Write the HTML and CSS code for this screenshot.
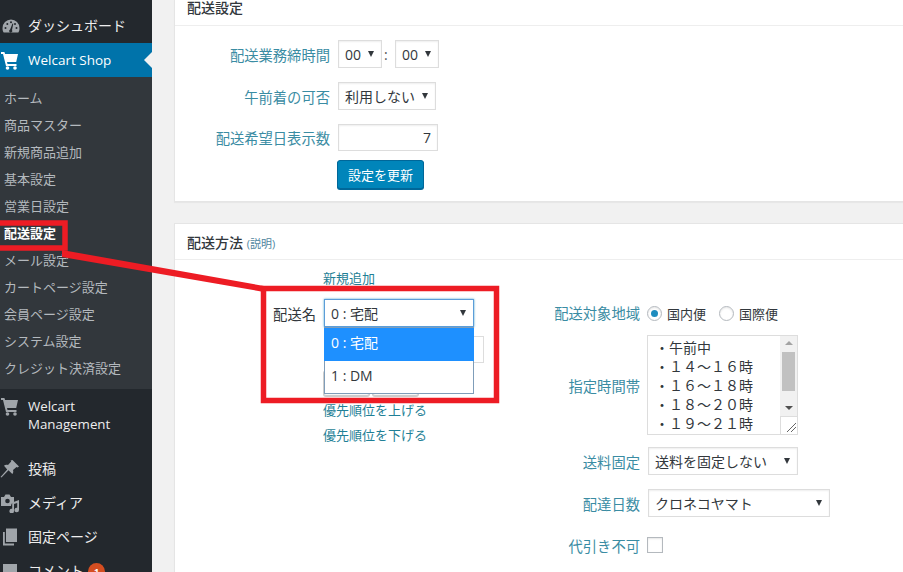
FILE: index.html
```html
<!DOCTYPE html>
<html lang="ja">
<head>
<meta charset="utf-8">
<title>配送設定</title>
<link rel="stylesheet" href="styles.css">
</head>
<body>
<div class="page">
  <nav class="sidebar">
    <a class="top dash">
      <svg class="ico" viewBox="0 0 20 20"><path d="M10 3.500a8.700 8.700 0 0 0-8.500 8.700c0 1.800.5 3.300 1.200 4.300h14.600c.7-1 1.200-2.500 1.200-4.300A8.700 8.700 0 0 0 10 3.500z"/><g fill="#23282d"><circle cx="4.500" cy="12" r="1"/><circle cx="6.300" cy="8" r="1"/><circle cx="10" cy="6.300" r="1"/><circle cx="14" cy="8" r="1"/><circle cx="15.500" cy="12" r="1"/><path d="M11.500 7.500l.8.300-1.300 6.200a1.600 1.600 0 1 1-1.900-.5z"/></g></svg>
      <span>ダッシュボード</span>
    </a>
    <a class="top current">
      <svg class="ico" viewBox="0 0 20 20"><path d="M1 2h3.400l.7 2H18l-1.800 8H7l.5 2h9v2H6L3 4H1z"/><circle cx="7.500" cy="18" r="1.800"/><circle cx="15" cy="18" r="1.800"/></svg>
      <span>Welcart Shop</span>
    </a>
    <ul class="submenu">
      <li>ホーム</li>
      <li>商品マスター</li>
      <li>新規商品追加</li>
      <li>基本設定</li>
      <li>営業日設定</li>
      <li class="on">配送設定</li>
      <li>メール設定</li>
      <li>カートページ設定</li>
      <li>会員ページ設定</li>
      <li>システム設定</li>
      <li>クレジット決済設定</li>
    </ul>
    <a class="top tall">
      <svg class="ico" viewBox="0 0 20 20"><path d="M1 2h3.400l.7 2H18l-1.800 8H7l.5 2h9v2H6L3 4H1z"/><circle cx="7.500" cy="18" r="1.800"/><circle cx="15" cy="18" r="1.800"/></svg>
      <span>Welcart<br>Management</span>
    </a>
    <a class="top">
      <svg class="ico" viewBox="0 0 20 20"><path d="M12.500 1l6.500 6.500-1.500 1-1-.6-3.500 3.200c.6 1.800.2 3-.7 4L8.500 11.300 1.500 18.500 0.500 18l6.700-7.500L4 6.700c1-.9 2.300-1.300 4-.7l3.200-3.500-.6-1z"/></svg>
      <span>投稿</span>
    </a>
    <a class="top">
      <svg class="ico" viewBox="0 0 20 20"><path d="M1 4h3l1.500-2.500h4L11 4h3v5.500c-1.800.3-3 1.500-3 3.500H1z"/><circle cx="7.500" cy="8" r="2.300" fill="#23282d"/><path d="M19 7v10a2.300 2.300 0 1 1-1.800-2.200V10l-3.200 1v7a2.300 2.300 0 1 1-1.800-2.200V9.500z"/></svg>
      <span>メディア</span>
    </a>
    <a class="top">
      <svg class="ico" viewBox="0 0 20 20"><path d="M6 1.500h11v13.500H6z"/><path d="M3 5v13.500h11v-2H4.800V5z"/></svg>
      <span>固定ページ</span>
    </a>
    <a class="top">
      <svg class="ico" viewBox="0 0 20 20"><path d="M3 3h14v11h-6l-4 4v-4H3z"/></svg>
      <span>コメント</span><b class="badge">1</b>
    </a>
  </nav>

  <main class="main">
    <section class="box box-first">
      <h2 class="box-title">配送設定</h2>
      <div class="settings">
        <label class="lbl">配送業務締時間</label>
        <div class="inline">
          <div class="select w44"><span>00</span><i class="caret"></i></div>
          <span class="colon">:</span>
          <div class="select w44"><span>00</span><i class="caret"></i></div>
        </div>
        <label class="lbl">午前着の可否</label>
        <div class="select w98"><span>利用しない</span><i class="caret"></i></div>
        <label class="lbl">配送希望日表示数</label>
        <input class="num" type="text" value="7">
        <span></span>
        <button class="primary" type="button">設定を更新</button>
      </div>
    </section>

    <section class="box box-second">
      <h2 class="box-title">配送方法 <small>(説明)</small></h2>
      <div class="method">
        <div class="method-left">
          <a class="link add">新規追加</a>
          <div class="name-row">
            <label class="plain">配送名</label>
            <div class="combo">
              <div class="select focus w150"><span>0 : 宅配</span><i class="caret"></i></div>
              <ul class="dropdown">
                <li class="sel">0 : 宅配</li>
                <li>1 : DM</li>
              </ul>
            </div>
          </div>
          <div class="under">
            <input class="name-input" type="text">
            <div class="btns"><button class="ghost" type="button"></button><button class="ghost" type="button"></button></div>
            <a class="link">優先順位を上げる</a>
            <a class="link">優先順位を下げる</a>
          </div>
        </div>
        <div class="method-right">
          <label class="lbl r1">配送対象地域</label>
          <div class="radios">
            <span class="radio checked"></span><span class="rtext">国内便</span>
            <span class="radio second"></span><span class="rtext">国際便</span>
          </div>
          <label class="lbl">指定時間帯</label>
          <div class="area">
            <div class="area-text">
              <div>・午前中</div>
              <div>・１４～１６時</div>
              <div>・１６～１８時</div>
              <div>・１８～２０時</div>
              <div>・１９～２１時</div>
            </div>
            <div class="scroll">
              <div class="sb">
                <i class="sb-up"></i>
                <i class="sb-thumb"></i>
                <i class="sb-down"></i>
              </div>
              <div class="grip">
                <svg viewBox="0 0 16 16" width="16" height="16"><path d="M6 15L15 6M10 15l5-5" stroke="#666" fill="none"/></svg>
              </div>
            </div>
          </div>
          <label class="lbl">送料固定</label>
          <div class="select w150"><span>送料を固定しない</span><i class="caret"></i></div>
          <label class="lbl">配達日数</label>
          <div class="select w182"><span>クロネコヤマト</span><i class="caret"></i></div>
          <label class="lbl">代引き不可</label>
          <div class="check-cell"><input class="check" type="checkbox"></div>
        </div>
      </div>
    </section>
  </main>

  <svg class="annot" viewBox="0 0 903 572" width="903" height="572">
    <g fill="none" stroke="#ed1c24" stroke-width="5.500">
      <path d="M-5 223H65V248H-5"/>
      <path d="M263.500 288.500H496.500V400.500H263.500z"/>
    </g>
    <path d="M62 250L264 286 264 292 62 257z" fill="#ed1c24"/>
  </svg>
</div>
</body>
</html>
```
FILE: styles.css
```css
* { box-sizing: border-box; }
html, body { margin: 0; height: 572px; overflow: hidden; }
body {
  font-family: "Open Sans", "Noto Sans CJK JP", sans-serif;
  font-size: 14px;
  color: #32373c;
  background: #f1f1f1;
}
.page { position: relative; display: flex; width: 903px; height: 572px; overflow: hidden; }

/* Sidebar */
.sidebar { width: 152px; flex: none; background: #23282d; padding-top: 9px; }
.top {
  display: flex; align-items: center; height: 34px;
  color: #eee; font-size: 14px; line-height: 18px; position: relative;
}
.top span { margin-left: 8px; }
.dash { padding-left: 1px; padding-bottom: 1px; }
.dash span { margin-left: 7px; }
.ico { width: 20px; height: 20px; flex: none; fill: #a0a5aa; }
.current { background: #0073aa; color: #fff; font-size: 13.500px; }
.current .ico { fill: #fff; }
.current::after {
  content: ""; position: absolute; right: 0; top: 9px;
  border: 8px solid transparent; border-right-color: #f1f1f1; border-left-width: 0;
}
.tall { height: 63px; align-items: flex-start; padding-top: 8px; }
.tall .ico { margin-top: -1px; }
.tall span { font-size: 13.300px; }
.badge {
  width: 17px; height: 17px; margin-left: 4px; border-radius: 50%;
  background: #d54e21; color: #fff; font-size: 9px; line-height: 17px; text-align: center;
}
.submenu { list-style: none; margin: 0; padding: 8px 0 7px; background: #32373c; }
.submenu li { height: 27px; line-height: 27px; padding-left: 4px; font-size: 13px; color: #b4b9be; }
.submenu .on { color: #fff; font-weight: 700; }

/* Main */
.main { flex: 1; min-width: 0; padding-left: 22px; }
.box { background: #fff; border: 1px solid #e5e5e5; border-right: 0; box-shadow: 0 1px 1px rgba(0,0,0,.04); }
.box-first { border-top: 0; height: 202px; }
.box-second { margin-top: 21px; height: 400px; }
.box-title {
  margin: 0; padding: 0 12px; font-size: 14px; font-weight: 500; line-height: 16px;
  border-bottom: 1px solid #eee; color: #32373c;
}
.box-first .box-title { height: 26px; }
.box-second .box-title { height: 36px; padding-top: 11px; }
.box-title small { font-size: 11px; font-weight: 400; color: #4f86a0; }

.settings {
  display: grid; grid-template-columns: 155px auto; justify-content: start;
  column-gap: 8px; padding: 14px 0 0; align-items: center; row-gap: 14px;
}
.lbl { text-align: right; color: #3a8ca3; font-size: 14.300px; white-space: nowrap; }
.r1 { padding-bottom: 1px; }
.inline { display: flex; align-items: center; }
.colon { width: 13px; padding-left: 2px; color: #555; }
.select {
  display: flex; align-items: center; justify-content: space-between; height: 28px;
  padding: 0 7px 0 6px; background: #fff; border: 1px solid #ddd;
  box-shadow: inset 0 1px 2px rgba(0,0,0,.07); color: #32373c; white-space: nowrap; font-size: 14px;
}
.w44 { width: 44px; }
.w98 { width: 98px; }
.w150 { width: 150px; }
.w182 { width: 182px; }
.caret { width: 0; height: 0; border: 3.500px solid transparent; border-top: 6px solid #32373c; border-bottom: 0; flex: none; }
.num {
  width: 100px; height: 27px; margin: 0; padding: 0 6px; text-align: right;
  border: 1px solid #ddd; box-shadow: inset 0 1px 2px rgba(0,0,0,.07);
  font: inherit; color: #32373c; background: #fff;
}
.primary {
  width: 87px; height: 29px; margin: -5px 0 0 -1px; padding: 0; border: 1px solid #006799; border-radius: 3px;
  background: #0085ba; color: #fff; font: inherit; font-size: 13px; box-shadow: 0 1px 0 #006799;
}

.method { display: flex; padding-left: 12px; }
.method-left { width: 297px; flex: none; display: flex; flex-direction: column; }
.link { color: #1f7f96; font-size: 13px; line-height: 20px; }
.add { margin: 8px 0 11px 136px; }
.name-row { display: flex; align-items: center; }
.plain { width: 129px; margin-right: 8px; text-align: right; color: #32373c; font-size: 14.300px; }
.combo { position: relative; }
.focus { border-color: #5b9dd9; box-shadow: 0 0 2px rgba(30,140,190,.8); padding-bottom: 1px; }
.dropdown {
  position: absolute; left: 0; top: 28px; width: 150px; margin: 0; padding: 0; list-style: none;
  background: #fff; border: 1px solid #7f9db9; z-index: 2; font-size: 14px;
}
.dropdown li { height: 33px; line-height: 30px; padding-left: 6px; }
.dropdown li:last-child { height: 32px; }
.dropdown .sel { background: #1e90ff; color: #fff; margin: 0 -1px; padding-left: 7px; }
.under { display: flex; flex-direction: column; padding-left: 137px; }
.name-input { width: 160px; height: 27px; margin-top: 9px; border: 1px solid #ddd; background: #fff; }
.btns { display: flex; gap: 2px; margin: 7px 0 2px -1px; }
.ghost {
  width: 47px; height: 26px; padding: 0; border: 1px solid #ccc; border-radius: 3px;
  background: #f7f7f7; box-shadow: 0 1px 0 #ccc;
}
.under .link { margin-left: -1px; height: 25px; line-height: 25px; }

.method-right {
  margin-left: 60px; display: grid; grid-template-columns: 96px auto; column-gap: 8px;
  justify-content: start; align-items: center; align-content: start;
  grid-template-rows: 28px 108px 40px 42px 42px; padding-top: 39px;
}
.method-right > :nth-child(3), .method-right > :nth-child(4) { margin-top: 8px; }
.method-right > :nth-child(5), .method-right > :nth-child(6) { margin-top: 12px; }
.method-right > :nth-child(7), .method-right > :nth-child(8) { margin-top: 14px; }
.method-right > :nth-child(9), .method-right > :nth-child(10) { margin-top: 14px; }
.radios { display: flex; align-items: center; margin-left: -1px; }
.radio {
  width: 15px; height: 15px; border-radius: 50%; border: 1px solid #b4b9be; background: #fff;
  box-shadow: inset 0 1px 2px rgba(0,0,0,.1); position: relative; flex: none;
}
.radio.checked::after {
  content: ""; position: absolute; left: 3px; top: 3px; width: 7px; height: 7px; border-radius: 50%; background: #1e8cbe;
}
.second { margin-left: 13px; }
.rtext { margin-left: 5px; font-size: 13px; line-height: 16px; padding-top: 1px; color: #32373c; }
.area {
  display: flex; width: 151px; height: 100px; margin-left: -1px; border: 1px solid #ddd; background: #fff; overflow: hidden;
}
.area-text { flex: 1; padding: 2px 0 0 7px; font-size: 14px; line-height: 19px; white-space: nowrap; color: #32373c; overflow: hidden; }
.scroll { width: 17px; flex: none; display: flex; flex-direction: column; }
.sb { height: 80px; background: #f1f1f1; display: flex; flex-direction: column; align-items: center; position: relative; }
.sb-up, .sb-down { flex: none; width: 0; height: 0; border: 4px solid transparent; box-sizing: content-box; }
.sb-up { margin-top: 5px; border-top: 0; border-bottom: 4px solid #a3a3a3; }
.sb-down { margin-top: auto; margin-bottom: 6px; border-bottom: 0; border-top: 4px solid #505050; }
.sb-thumb { width: 13px; height: 39px; background: #c1c1c1; margin-top: 7px; }
.grip { flex: 1; border: 1px solid #ddd; border-right: 0; border-bottom: 0; background: #fff; }
.grip svg { display: block; }
.check-cell { display: flex; }
.check {
  appearance: none; width: 16px; height: 16px; margin: 0 0 0 -1px; border: 1px solid #b4b9be; background: #fff;
  box-shadow: inset 0 1px 2px rgba(0,0,0,.1);
}

.annot { position: absolute; left: 0; top: 0; pointer-events: none; z-index: 5; }
```
